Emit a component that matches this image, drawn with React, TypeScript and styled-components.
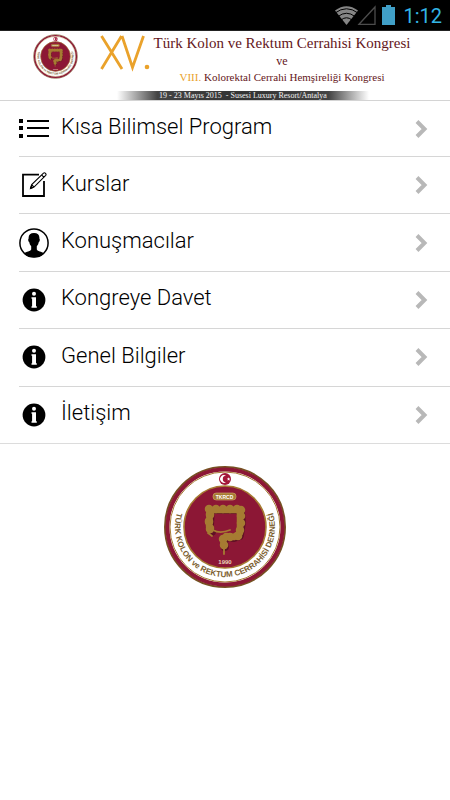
import React, { useId } from "react";
import styled, { createGlobalStyle } from "styled-components";

const GlobalStyle = createGlobalStyle`
  * { box-sizing: border-box; }
  body { margin: 0; background: #fff; color: #000; font-family: Roboto, "Noto Sans", sans-serif; }
`;

const Page = styled.div`
  min-height: 100vh;
  display: flex;
  flex-direction: column;
`;

const StatusBar = styled.div`
  height: 30px;
  padding-right: 8px;
  background: #000;
  display: flex;
  align-items: center;
  justify-content: flex-end;
`;

const Clock = styled.time`
  margin-left: 8px;
  padding-top: 2px;
  color: #33b5e5;
  font-size: 20px;
  line-height: 28px;
`;

const Banner = styled.header`
  height: 71px;
  border-top: 1px solid #222;
  border-bottom: 1px solid #d4d4d4;
  padding-left: 33px;
  display: flex;
`;

const BannerLogo = styled.div`
  width: 45px;
  padding-top: 3px;
`;

const BannerText = styled.div`
  flex: 1;
  display: flex;
  flex-direction: column;
  justify-content: space-between;
`;

const Headline = styled.div`
  display: flex;
  padding-left: 21px;
`;

const Edition = styled.div`
  width: 58px;
  padding-top: 3px;
`;

const Titles = styled.h1`
  margin: 0;
  width: 250px;
  display: flex;
  flex-direction: column;
  align-items: center;
  color: #64161a;
  font-family: "Liberation Serif", serif;
  font-weight: 400;
  white-space: nowrap;
`;

const TitleLine = styled.span<{ $size: number; $height: number }>`
  font-size: ${(p) => p.$size}px;
  line-height: ${(p) => p.$height}px;
`;

const Numeral = styled.span`
  color: #eaa22b;
`;

const DateStrip = styled.p`
  margin: 0 81px 0 39px;
  height: 9px;
  background: linear-gradient(90deg, #fff, #444 16%, #333 50%, #444 84%, #fff);
  color: #f2f2f2;
  font-family: "Liberation Serif", serif;
  font-size: 8px;
  line-height: 9px;
  text-align: center;
  white-space: pre;
`;

const Menu = styled.ul`
  margin: 0;
  padding: 0;
  height: 343px;
  list-style: none;
  display: grid;
  grid-template-rows: 55px repeat(5, 1fr);
  border-bottom: 1px solid #dcdcdc;
`;

const MenuItem = styled.li`
  display: flex;
  margin-left: 19px;
  & + & { border-top: 1px solid #d6d6d6; }
`;

const MenuLink = styled.a`
  flex: 1;
  padding-right: 22px;
  display: flex;
  align-items: center;
  color: #000;
  text-decoration: none;
`;

const IconSlot = styled.span`
  width: 42px;
  display: flex;
`;

const Label = styled.span`
  flex: 1;
  padding-bottom: 3px;
  font-size: 22px;
  font-weight: 300;
  line-height: 28px;
`;

const Footer = styled.footer`
  padding-top: 21px;
  display: flex;
  justify-content: center;
`;

const GOLD = "#a67b32";
const MAROON = "#8c1735";

function Emblem({ size }: { size: number }) {
  const arc = useId();
  return (
    <svg width={size} height={size} viewBox="-62 -62 124 124" role="img" aria-label="TKRCD">
      <circle r="60" fill="#fff" stroke="#765022" strokeWidth="2" />
      <circle r="57.5" fill="none" stroke={MAROON} strokeWidth="4" />
      <circle r="55" fill="none" stroke={GOLD} strokeWidth="1" />
      <circle r="41" fill={MAROON} stroke={GOLD} strokeWidth="1.6" />
      <circle cy="-48" r="6" fill="#a31738" />
      <path d="M1-51.2a3.8 3.8 0 1 0 0 6.4a3 3 0 1 1 0-6.4Z" fill="#fff" />
      <path d="m3.6-49.8.5 1.2 1.3.1-1 .8.4 1.3-1.2-.7-1.1.7.3-1.3-1-.8 1.3-.1Z" fill="#fff" />
      <rect x="-12" y="-34" width="23" height="7" rx="3.2" fill={GOLD} stroke="#d3b26d" strokeWidth=".6" />
      <text x="-.5" y="-28.500" fill="#fff" fontFamily="Liberation Sans, sans-serif" fontSize="5" fontWeight="700" textAnchor="middle">TKRCD</text>
      <g fill="none" stroke="#5f1024" strokeLinecap="round" strokeLinejoin="round" transform="translate(.8 1)">
        <path d="M-14 4-16 0-15-18H15L16-5 14 8 8 10 1 9-2 13-1 19" strokeWidth="8" />
      </g>
      <g fill="none" stroke={GOLD} strokeLinecap="round" strokeLinejoin="round">
        <path d="M-15 3-16-1-15-17H15V6L9 10 1 9-2 13-1 19" strokeWidth="6.5" />
        <path d="M-15 2-15 1M-16-5V-6M-15-12V-13M-16-18V-18M-9-18V-18M-2-18V-18M5-18V-18M12-18V-18M16-17V-17M16-11V-11M16-4V-4M15 3V3M13 9V9M5 10V10M-2 12V12M-1 18V18" strokeWidth="8.500" />
        <path d="M-17 6-13 9M-12 3C-7 6 0 5 5 3M-1 20V27" strokeWidth="1.8" />
      </g>
      <text y="37" fill="#ead6b8" fontFamily="Liberation Sans, sans-serif" fontSize="6" fontWeight="700" textAnchor="middle">1990</text>
      <path id={arc} d="M-43.3-25A50 50 0 1 0 43.3-25" fill="none" />
      <text fill="#7c602f" fontFamily="Liberation Sans, sans-serif" fontSize="8" fontWeight="700" textAnchor="middle">
        <textPath href={`#${arc}`} startOffset="50%">TÜRK KOLON ve REKTUM CERRAHİSİ DERNEĞİ</textPath>
      </text>
    </svg>
  );
}

function ListIcon() {
  return (
    <svg width="30" height="20" viewBox="0 0 30 20" aria-hidden="true">
      <path d="M0 0h4v4H0zM0 7h4v4H0zM0 15h4v4H0zM8 1h22v2H8zM8 8h22v2H8zM8 16h22v2H8z" />
    </svg>
  );
}

function EditIcon() {
  return (
    <svg width="30" height="26" viewBox="0 0 30 26" fill="none" stroke="#000" aria-hidden="true">
      <path d="M20 2.7H4V24h21V9" strokeWidth="1.8" />
      <path d="m11.5 16.5 1.2-4L24.5 1.1q1-.8 2 .2t.2 2L15 15.1Zm1.2-4 2.3 2.6M22.6 2.9l2.4 2.4" strokeWidth="1.1" />
      <path d="m11.5 16.5.8-2.5 1.6 1.6Z" fill="#000" />
    </svg>
  );
}

function PersonIcon() {
  return (
    <svg width="30" height="30" viewBox="0 0 30 30" aria-hidden="true">
      <circle cx="15" cy="15" r="14.1" fill="none" stroke="#000" strokeWidth="1.5" />
      <path d="M15 5c-3.800 0-5.700 2.100-5.400 5.700-.8.300-.3 3 .6 3.400.4 2 .9 3 2 4.100v3.300c-.7 1.800-4.700 2.200-7.400 3.700A14 14 0 0 0 15 29.200a14 14 0 0 0 10.200-4c-2.700-1.500-6.700-1.900-7.400-3.700v-3.300c1.100-1.100 1.600-2.100 2-4.100.9-.4 1.400-3.100.6-3.400C20.700 7.100 18.800 5 15 5Z" />
    </svg>
  );
}

function InfoIcon() {
  return (
    <svg width="30" height="24" viewBox="0 0 30 24" aria-hidden="true">
      <circle cx="15" cy="12" r="11.4" />
      <circle cx="15" cy="5.800" r="2" fill="#fff" />
      <path d="M12.500 9.300h4.500v9h.8v1.500h-5.300v-1.500h.6v-7.500h-.6z" fill="#fff" />
    </svg>
  );
}

function Chevron() {
  return (
    <svg width="13" height="20" viewBox="0 0 13 20" fill="none" stroke="#b8b8b8" strokeWidth="4" aria-hidden="true">
      <path d="m2 2.500 7.500 7.500L2 17.500" />
    </svg>
  );
}

const items = [
  { label: "Kısa Bilimsel Program", Icon: ListIcon },
  { label: "Kurslar", Icon: EditIcon },
  { label: "Konuşmacılar", Icon: PersonIcon },
  { label: "Kongreye Davet", Icon: InfoIcon },
  { label: "Genel Bilgiler", Icon: InfoIcon },
  { label: "İletişim", Icon: InfoIcon },
];

export default function App() {
  return (
    <Page>
      <GlobalStyle />
      <StatusBar>
        <svg width="60" height="22" viewBox="1 0 60 22" aria-hidden="true">
          <path d="M1 6.500Q12.500-2 24 6.500L12.500 21Z" fill="#858585" />
          <path d="M1 9q11.500-8.500 23 0M4 12.500q8.500-6.500 17 0M7 16q5.500-4.500 11 0" fill="none" stroke="#000" strokeWidth="1" />
          <path d="M25 20.300 41 3v17.300Z" fill="none" stroke="#4c4c4c" strokeWidth="1.300" />
          <path d="M48 3h4V1h5v2h4v18H48Z" fill="#409fc7" />
        </svg>
        <Clock>1:12</Clock>
      </StatusBar>
      <Banner>
        <BannerLogo><Emblem size={45} /></BannerLogo>
        <BannerText>
          <Headline>
            <Edition>
              <svg width="52" height="38" viewBox="0 0 52 38" role="img" aria-label="XV." fill="none" stroke="#eaa22b" strokeWidth="2.800">
                <path d="M2.500 2 23 35M22.500 2 2.500 35M23 2 33.500 33.500 44.500 2" />
                <circle cx="48" cy="33" r="2.300" fill="#eaa22b" stroke="none" />
              </svg>
            </Edition>
            <Titles>
              <TitleLine $size={15} $height={24}>Türk Kolon ve Rektum Cerrahisi Kongresi</TitleLine>
              <TitleLine $size={12} $height={13}>ve</TitleLine>
              <TitleLine $size={11} $height={18}><Numeral>VIII.</Numeral> Kolorektal Cerrahi Hemşireliği Kongresi</TitleLine>
            </Titles>
          </Headline>
          <DateStrip>19 - 23 Mayıs 2015  - Susesi Luxury Resort/Antalya</DateStrip>
        </BannerText>
      </Banner>
      <nav>
        <Menu>
          {items.map(({ label, Icon }) => (
            <MenuItem key={label}>
              <MenuLink href="#">
                <IconSlot><Icon /></IconSlot>
                <Label>{label}</Label>
                <Chevron />
              </MenuLink>
            </MenuItem>
          ))}
        </Menu>
      </nav>
      <Footer><Emblem size={124} /></Footer>
    </Page>
  );
}
